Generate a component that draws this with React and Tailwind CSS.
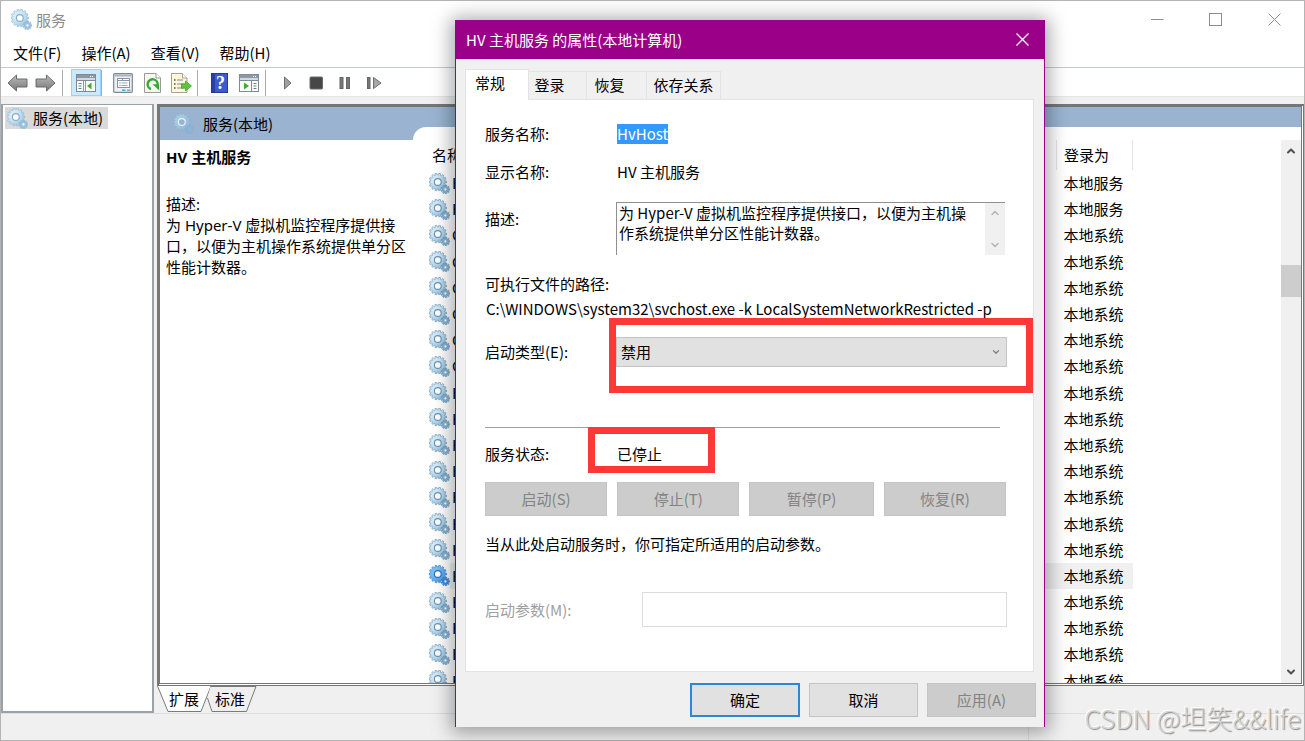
import React from "react";
import { ChevronDown, ChevronUp } from "lucide-react";

const FONT = "font-['Noto_Sans_CJK_SC','Noto_Sans',sans-serif]";

function gearPath(cx, cy, outer, inner, teeth) {
  const pts = [];
  const step = (Math.PI * 2) / teeth;
  for (let i = 0; i < teeth; i++) {
    const a = i * step;
    [
      [-0.24, outer],
      [0.24, outer],
      [0.3, inner],
      [0.7, inner],
    ].forEach(([t, r]) => {
      pts.push(`${(cx + Math.cos(a + t * step) * r).toFixed(2)} ${(cy + Math.sin(a + t * step) * r).toFixed(2)}`);
    });
  }
  return `M${pts.join("L")}Z`;
}

const BIG_GEAR = gearPath(8.8, 9, 8.8, 7.2, 14);
const SMALL_GEAR = gearPath(16.4, 16.4, 4.4, 3.2, 9);

const GEAR_TONES = {
  normal: { top: "#d3ebf8", bottom: "#84b6d8", edge: "#6793b5", ring: "#6b95b4", hole: "#ffffff" },
  pale: { top: "#d6ecf8", bottom: "#9bc4e0", edge: "#8ab2ce", ring: "#86aeca", hole: "#ffffff" },
  header: { top: "#a9cbe4", bottom: "#8cb4d4", edge: "#8ab0d0", ring: "#e6f5fc", hole: "#9ab3d0" },
  selected: { top: "#7cc0fa", bottom: "#3a90e4", edge: "#2f80d0", ring: "#2b6fb8", hole: "#ffffff" },
};

function Gear({ tone = "normal", className = "size-[21px]" }) {
  const c = GEAR_TONES[tone];
  const id = `gear-${tone}`;
  return (
    <svg viewBox="0 0 21 21" className={`${className} shrink-0`} aria-hidden="true">
      <defs>
        <linearGradient id={id} x1="0" y1="0" x2="1" y2="1">
          <stop offset="0.3" stopColor={c.top} />
          <stop offset="1" stopColor={c.bottom} />
        </linearGradient>
      </defs>
      <path d={BIG_GEAR} fill={`url(#${id})`} stroke={c.edge} strokeWidth="0.6" />
      <circle cx="8.8" cy="9" r="3.4" fill={c.hole} stroke={c.ring} strokeWidth="1.1" />
      <path d={SMALL_GEAR} fill={c.bottom} stroke={c.edge} strokeWidth="0.6" />
      <circle cx="16.4" cy="16.4" r="1.1" fill={c.hole} />
    </svg>
  );
}

function ArrowIcon({ back }) {
  return (
    <svg viewBox="0 0 21 20" className="h-5 w-[21px]" aria-hidden="true">
      <defs>
        <linearGradient id={back ? "arrow-b" : "arrow-f"} x1="0" y1="0" x2="0" y2="1">
          <stop offset="0" stopColor="#bdbdbd" />
          <stop offset="1" stopColor="#767676" />
        </linearGradient>
      </defs>
      <path
        d={back ? "M1 10 L9.5 2 V6 H20 V14 H9.5 V18 Z" : "M20 10 L11.5 2 V6 H1 V14 H11.5 V18 Z"}
        fill={back ? "url(#arrow-b)" : "url(#arrow-f)"}
        stroke="#6b6b6b"
        strokeLinejoin="round"
      />
    </svg>
  );
}

function PaneIcon({ right }) {
  return (
    <svg viewBox="0 0 20 18" className="h-[18px] w-5" aria-hidden="true">
      <rect x="0.5" y="0.5" width="19" height="17" fill="#fff" stroke="#7e8a96" />
      <rect x="1" y="1" width="18" height="3" fill="#8c98a5" />
      <path d="M14 2.5h1M16 2.5h1" stroke="#fff" />
      <rect x="1" y="4" width="18" height="3" fill="#d3d9df" />
      <path d="M1 6.5h18" stroke="#7e8a96" />
      {right ? (
        <>
          <path d="M12.5 7v10" stroke="#7e8a96" />
          <path d="M14.5 9.5h3M14.5 12h3M14.5 14.5h3" stroke="#5b7fa8" />
          <path d="M5 8.5 L10 12 L5 15.5Z" fill="#3fae2a" />
        </>
      ) : (
        <>
          <path d="M7.5 7v10M9.5 7v10" stroke="#8f9aa6" />
          <path d="M2.500 9.5h3M2.5 12h3M2.5 14.5h3" stroke="#5b7fa8" />
          <path d="M15.5 8.5 L11 12 L15.5 15.5Z" fill="#3fae2a" />
        </>
      )}
    </svg>
  );
}

function PropertiesIcon() {
  return (
    <svg viewBox="0 0 20 20" className="size-5" aria-hidden="true">
      <rect x="0.7" y="0.7" width="18.6" height="18.6" rx="1" fill="#eef1f4" stroke="#7c8792" strokeWidth="1.2" />
      <rect x="1.5" y="1.5" width="17" height="2" fill="#a9b3bd" />
      <rect x="4.5" y="5.5" width="12" height="9" fill="#fff" stroke="#8994a0" />
      <path d="M5 7.5h4.5v-1.5M9.5 7.5h7" stroke="#8994a0" fill="none" />
      <path d="M6.5 10h1M6.5 12.5h1" stroke="#3b7fc0" />
      <path d="M8.5 10h6M8.5 12.5h6" stroke="#9aa5b0" />
      <path d="M9 17.2h3.5" stroke="#27b5e8" strokeWidth="1.5" />
      <path d="M14 17.2h3.5" stroke="#8fa0ae" strokeWidth="1.5" />
    </svg>
  );
}

function RefreshIcon() {
  return (
    <svg viewBox="0 0 17 20" className="h-5 w-[17px]" aria-hidden="true">
      <path d="M0.5 0.5 H12 L16.5 5 V19.5 H0.5Z" fill="#f7f7f2" stroke="#9a9a96" />
      <path d="M12 0.5V5h4.5" fill="#fff" stroke="#9a9a96" />
      <path d="M7 16A5 5 0 1 1 13.6 12" fill="none" stroke="#37a836" strokeWidth="2.4" />
      <path d="M8.6 11.2h6.6v6.2z" fill="#37a836" />
    </svg>
  );
}

function ExportIcon() {
  return (
    <svg viewBox="0 0 21 20" className="h-5 w-[21px]" aria-hidden="true">
      <path d="M0.5 0.5 H11.5 L16 5 V19.5 H0.5Z" fill="#fdf8dc" stroke="#a8a28c" />
      <path d="M11.5 0.5V5H16" fill="#fff" stroke="#a8a28c" />
      <path d="M3 7h1.5M3 11h1.5M3 15h1.5" stroke="#4a4a4a" strokeWidth="1.5" />
      <path d="M6 7h6M6 11h5M6 15h6" stroke="#8d7c9c" strokeWidth="1.2" />
      <path d="M10.5 10.8h4V8l6 5-6 5v-2.8h-4z" fill="#5cc63a" stroke="#3c9b26" strokeWidth="0.7" />
    </svg>
  );
}

function HelpIcon() {
  return (
    <span className="flex h-5 w-[17px] border border-[#26389a] bg-[#3c5bd0]">
      <span className="w-[3px] bg-[#2b3fa4]" />
      <span className="flex-1 text-center font-['Liberation_Serif',serif] text-[18px] leading-[18px] font-bold text-white">?</span>
    </span>
  );
}

function MediaIcon({ kind }) {
  return (
    <svg viewBox="0 0 16 14" className="h-3.5 w-4" aria-hidden="true">
      {kind === "play" && <path d="M5.5 1 L12 7 L5.5 13Z" fill="#a0a0a0" stroke="#6e6e6e" />}
      {kind === "stop" && <rect x="2" y="1" width="12.5" height="12" rx="1" fill="#474747" stroke="#6a6a6a" />}
      {kind === "pause" && (
        <>
          <rect x="3" y="1.5" width="3" height="11" fill="#777" stroke="#666" />
          <rect x="9.5" y="1.5" width="3" height="11" fill="#777" stroke="#666" />
        </>
      )}
      {kind === "step" && (
        <>
          <rect x="1.5" y="1.5" width="2.5" height="11" fill="#777" stroke="#666" />
          <path d="M7.500 1.5 L15 7 L7.5 12.5Z" fill="#a8a8a8" stroke="#6e6e6e" />
        </>
      )}
    </svg>
  );
}

function ToolButton({ label, active, children }) {
  return (
    <button
      type="button"
      aria-label={label}
      className={`flex h-[27px] items-center justify-center ${active ? "w-[30px] border border-[#99d1ff] bg-[#cce8ff]" : "w-7"}`}
    >
      {children}
    </button>
  );
}

const Separator = () => <span className="h-[26px] w-px bg-[#a9adb2]" />;

function CaptionButton({ label, children, className = "w-[58px] text-[#8c8c8c]" }) {
  return (
    <button type="button" aria-label={label} className={`flex h-full items-center justify-center ${className}`}>
      <svg viewBox="0 0 13 13" className="size-[13px]" fill="none" stroke="currentColor" aria-hidden="true">
        {children}
      </svg>
    </button>
  );
}

const ROWS = [
  ["H", "本地服务"],
  ["H", "本地服务"],
  ["G", "本地系统"],
  ["G", "本地系统"],
  ["G", "本地系统"],
  ["G", "本地系统"],
  ["G", "本地系统"],
  ["G", "本地系统"],
  ["H", "本地系统"],
  ["H", "本地系统"],
  ["H", "本地系统"],
  ["H", "本地系统"],
  ["H", "本地系统"],
  ["H", "本地系统"],
  ["H", "本地系统"],
  ["H", "本地系统"],
  ["H", "本地系统"],
  ["H", "本地系统"],
  ["H", "本地系统"],
  ["H", "本地系统"],
];
const SELECTED_ROW = 15;

function ServiceTable() {
  return (
    <table className="h-[554px] w-full table-fixed border-collapse text-left">
      <thead>
        <tr className="h-[30px]">
          <th className="pl-[3px] font-normal">名称</th>
          <th className="w-[76px] border-x border-[#e5e5e5] pl-[7px] font-normal">登录为</th>
        </tr>
      </thead>
      <tbody>
        {ROWS.map(([name, account], i) => (
          <tr key={i}>
            <td className="p-0">
              <div className="flex h-[26px] items-center">
                <Gear tone={i === SELECTED_ROW ? "selected" : "normal"} />
                <span className={`flex h-full flex-1 items-center pl-0.5 ${i === SELECTED_ROW ? "bg-[#f0f0f0]" : ""}`}>
                  {name}
                </span>
              </div>
            </td>
            <td className={`p-0 pl-[7px] ${i === SELECTED_ROW ? "bg-[#f0f0f0]" : ""}`}>{account}</td>
          </tr>
        ))}
      </tbody>
    </table>
  );
}

function SheetTab({ children, active }) {
  return (
    <button type="button" className={`relative h-[26px] ${active ? "w-[54px]" : "-ml-1 w-[50px] pr-1"}`}>
      <svg
        viewBox={active ? "0 0 54 26" : "0 0 50 26"}
        className="absolute inset-0 h-full w-full"
        aria-hidden="true"
      >
        {active ? (
          <path d="M0.5 0 L11 25.5 H44 L54 0" fill="#fff" stroke="#7a7a7a" />
        ) : (
          <path d="M3.5 0.5 H49 L39.5 25.5 H5 L0.5 12" fill="#efefef" stroke="#7a7a7a" />
        )}
      </svg>
      <span className="relative">{children}</span>
    </button>
  );
}

function ServicesWindow() {
  return (
    <div className="flex h-screen min-h-[741px] flex-col border border-[#b4b4b4] bg-[#f0f0f0]">
      <header className="flex h-[37px] shrink-0 items-center bg-white pl-2.5 text-[#8c8c8c]">
        <Gear tone="pale" />
        <h1 className="ml-1 flex-1">服务</h1>
        <CaptionButton label="最小化">
          <path d="M0 6.5h12.5" />
        </CaptionButton>
        <CaptionButton label="最大化">
          <rect x="0.5" y="0.5" width="12" height="12" />
        </CaptionButton>
        <CaptionButton label="关闭" className="w-[60px] text-[#8c8c8c]">
          <path d="M0.5 0.5l12 12M12.5 0.5l-12 12" />
        </CaptionButton>
      </header>

      <nav className="flex h-[30px] shrink-0 items-center gap-5 border-b border-[#c3cad1] bg-white pl-3">
        {["文件(F)", "操作(A)", "查看(V)", "帮助(H)"].map((m) => (
          <button type="button" key={m}>{m}</button>
        ))}
      </nav>

      <div className="flex h-[29px] shrink-0 items-center border-b border-[#e5e5e5] bg-white pt-px pl-0.5" role="toolbar" aria-label="工具栏">
        <div className="flex">
          <ToolButton label="后退"><ArrowIcon back /></ToolButton>
          <ToolButton label="前进"><ArrowIcon /></ToolButton>
        </div>
        <div className="flex items-center gap-2 pl-[3px]">
          <Separator />
          <ToolButton label="显示控制台树" active><PaneIcon /></ToolButton>
        </div>
        <Separator />
        <div className="mr-0.5 ml-[7px] flex items-center gap-px">
          <ToolButton label="属性"><PropertiesIcon /></ToolButton>
          <ToolButton label="刷新"><RefreshIcon /></ToolButton>
          <ToolButton label="导出列表"><ExportIcon /></ToolButton>
        </div>
        <Separator />
        <div className="mr-0.5 ml-[7px] flex items-center gap-0.5">
          <ToolButton label="帮助"><HelpIcon /></ToolButton>
          <ToolButton label="显示操作窗格"><PaneIcon right /></ToolButton>
        </div>
        <Separator />
        <div className="ml-[7px] flex items-center gap-px">
          <ToolButton label="启动"><MediaIcon kind="play" /></ToolButton>
          <ToolButton label="停止"><MediaIcon kind="stop" /></ToolButton>
          <ToolButton label="暂停"><MediaIcon kind="pause" /></ToolButton>
          <ToolButton label="重新启动"><MediaIcon kind="step" /></ToolButton>
        </div>
      </div>

      <div className="flex min-h-0 flex-1 gap-[3px] pt-[7px]">
        <aside className="w-[153px] shrink-0 border-2 border-t-[1px] border-[#9aa1a8] bg-white pt-0.5 pl-0.5">
          <button type="button" className="flex h-[22px] items-center gap-[5px] bg-[#d9d9d9] pr-[5px] pl-0.5">
            <Gear tone="pale" />
            服务(本地)
          </button>
        </aside>

        <main className="flex min-w-0 flex-1 flex-col">
          <section className="flex min-h-0 flex-1 flex-col overflow-hidden border-[3px] border-[#767676] bg-white [border-style:solid_double_double_solid]">
            <div className="flex h-[33px] shrink-0 bg-[#99b3d1]">
              <div className="flex w-[253px] shrink-0 items-center gap-[9px] pl-[13px]">
                <Gear tone="header" />
                服务(本地)
              </div>
              <div className="h-[13px] flex-1 self-end rounded-tl-[13px] bg-white" />
            </div>
            <div className="flex min-h-0 flex-1">
              <div className="w-[269px] shrink-0 pt-[7px] pr-5 pl-1.5 font-['Noto_Sans','Noto_Sans_CJK_SC',sans-serif]">
                <h2 className="font-bold leading-[21px]">HV 主机服务</h2>
                <p className="mt-[26px] leading-[21px]">描述:</p>
                <p className="leading-[21px]">为 Hyper-V 虚拟机监控程序提供接口，以便为主机操作系统提供单分区性能计数器。</p>
              </div>
              <div className="min-h-0 min-w-0 flex-1 overflow-hidden pr-[148px]">
                <ServiceTable />
              </div>
              <div className="flex w-5 shrink-0 flex-col items-center justify-between bg-[#f0f0f0] text-[#505050]">
                <ChevronUp className="mt-[5px] size-3" strokeWidth={4} />
                <div className="mt-[108px] h-8 w-full bg-[#cdcdcd]" />
                <div className="flex-1" />
                <ChevronDown className="mb-[5px] size-3" strokeWidth={4} />
              </div>
            </div>
          </section>
          <div className="flex h-[27px] shrink-0">
            <SheetTab active>扩展</SheetTab>
            <SheetTab>标准</SheetTab>
          </div>
        </main>
      </div>

      <footer className="flex h-[27px] shrink-0 justify-end border-t border-[#dedede]">
        <div className="w-[276px] border-l border-[#dedede]" />
      </footer>
    </div>
  );
}

function Field({ label, children, className }) {
  return (
    <div className={`flex items-center ${className}`}>
      <span className="w-[132px] shrink-0">{label}</span>
      {children}
    </div>
  );
}

function PropertiesDialog() {
  return (
    <div
      role="dialog"
      aria-label="HV 主机服务 的属性(本地计算机)"
      className="absolute top-5 left-[455px] w-[590px] border-x border-[#9b0089] bg-[#f0f0f0] shadow-[0_2px_18px_4px_rgba(0,0,0,0.35)]"
    >
      <header className="flex h-[39px] items-center bg-[#9b0089] pl-2.5 text-white">
        <h2 className="flex-1">HV 主机服务 的属性(本地计算机)</h2>
        <CaptionButton label="关闭" className="w-[43px] text-white">
          <path d="M0.5 0.5l12 12M12.5 0.5l-12 12" strokeWidth="1.3" />
        </CaptionButton>
      </header>

      <div className="px-2.5 pt-2.5 pb-2.5">
        <div className="-ml-px flex items-end" role="tablist">
          <button type="button" role="tab" aria-selected="true" className="-mb-px h-[31px] w-16 border border-b-0 border-[#e3e3e3] bg-white pr-3.5 pb-1">常规</button>
          <button type="button" role="tab" className="h-7 w-[58px] border-t border-r border-[#e3e3e3] pr-4 pb-0.5">登录</button>
          <button type="button" role="tab" className="h-7 w-[60px] border-t border-r border-[#e3e3e3] pr-3.5 pb-0.5">恢复</button>
          <button type="button" role="tab" className="h-7 w-[74px] border-t border-r border-[#e3e3e3] pb-0.5">依存关系</button>
        </div>

        <div className="-ml-px border border-[#e3e3e3] bg-white pt-[23px] pr-7 pb-11 pl-[19px]">
          <Field label="服务名称:" className="h-[22px]">
            <span className="bg-[#3399ff] leading-5 text-white">HvHost</span>
          </Field>
          <Field label="显示名称:" className="mt-4 h-[22px]">HV 主机服务</Field>
          <div className="mt-[19px] flex h-[53px]">
            <label htmlFor="description" className="w-[131px] shrink-0 pt-1.5">描述:</label>
            <textarea
              id="description"
              readOnly
              className="min-w-0 flex-1 resize-none overflow-hidden border-t border-l border-[#8f8f8f] pr-3 pl-0.5 leading-5 outline-none"
              defaultValue="为 Hyper-V 虚拟机监控程序提供接口，以便为主机操作系统提供单分区性能计数器。"
            />
            <div className="flex w-5 flex-col items-center justify-between border-t border-[#8f8f8f] bg-[#f0f0f0] py-1 text-[#b4b4b4]">
              <ChevronUp className="size-3" strokeWidth={3} />
              <ChevronDown className="size-3" strokeWidth={3} />
            </div>
          </div>
          <p className="mt-[18px] leading-[22px]">可执行文件的路径:</p>
          <p className="mt-[3px] pl-px leading-[22px] whitespace-nowrap">C:\WINDOWS\system32\svchost.exe -k LocalSystemNetworkRestricted -p</p>

          <div className="mt-[17px] flex h-[30px] items-center">
            <label htmlFor="startup" className="w-[131px] shrink-0">启动类型(E):</label>
            <div className="relative -mr-0.5 flex-1">
              <select id="startup" className="h-[30px] w-full appearance-none border border-[#c4c4c4] bg-[#e1e1e1] pl-1 outline-none">
                <option>禁用</option>
              </select>
              <ChevronDown className="pointer-events-none absolute top-2.5 right-1.5 size-2.5 text-[#808080]" strokeWidth={3} />
            </div>
          </div>

          <hr className="mt-[60px] mr-[5px] border-[#a0a0a0]" />
          <Field label="服务状态:" className="mt-[15px] h-[22px]">已停止</Field>

          <div className="mt-[17px] -mr-px grid grid-cols-[122fr_122fr_124fr_122fr] gap-2.5">
            {["启动(S)", "停止(T)", "暂停(P)", "恢复(R)"].map((b) => (
              <button type="button" disabled key={b} className="h-[34px] border border-[#c4c4c4] bg-[#cccccc] text-[#838383]">{b}</button>
            ))}
          </div>

          <p className="mt-[17px] leading-[22px]">当从此处启动服务时，你可指定所适用的启动参数。</p>
          <div className="mt-[37px] flex items-center">
            <label htmlFor="params" className="w-[157px] shrink-0 text-[#a0a0a0]">启动参数(M):</label>
            <input id="params" disabled className="-mr-0.5 h-[35px] min-w-0 flex-1 border border-[#dcdcdc] bg-white px-1" />
          </div>
        </div>

        <div className="-mr-0.5 mt-[11px] flex justify-end gap-[9px]">
          <button type="button" className="h-[34px] w-[110px] border-2 border-[#2b88d8] bg-[#e1e1e1]">确定</button>
          <button type="button" className="h-[34px] w-[109px] border border-[#c4c4c4] bg-[#e1e1e1]">取消</button>
          <button type="button" disabled className="h-[34px] w-[109px] border border-[#c4c4c4] bg-[#cccccc] text-[#838383]">应用(A)</button>
        </div>
      </div>

      <div className="pointer-events-none absolute top-[298px] left-[153px] h-[75px] w-[424px] border-[7px] border-[#fd3838]" />
      <div className="pointer-events-none absolute top-[407px] left-[132px] h-[46px] w-[127px] border-[7px] border-[#fd3838]" />
    </div>
  );
}

export default function App() {
  return (
    <div className={`relative overflow-hidden text-[15px] leading-[22px] text-black ${FONT}`}>
      <ServicesWindow />
      <PropertiesDialog />
      <div className="pointer-events-none absolute right-1 bottom-[5px] text-[26px] leading-9 font-light text-[#d4d4d4] [text-shadow:1px_1px_1px_#8a8a8a,-1px_-1px_0_#ffffff]">
        CSDN @坦笑&amp;&amp;life
      </div>
    </div>
  );
}
